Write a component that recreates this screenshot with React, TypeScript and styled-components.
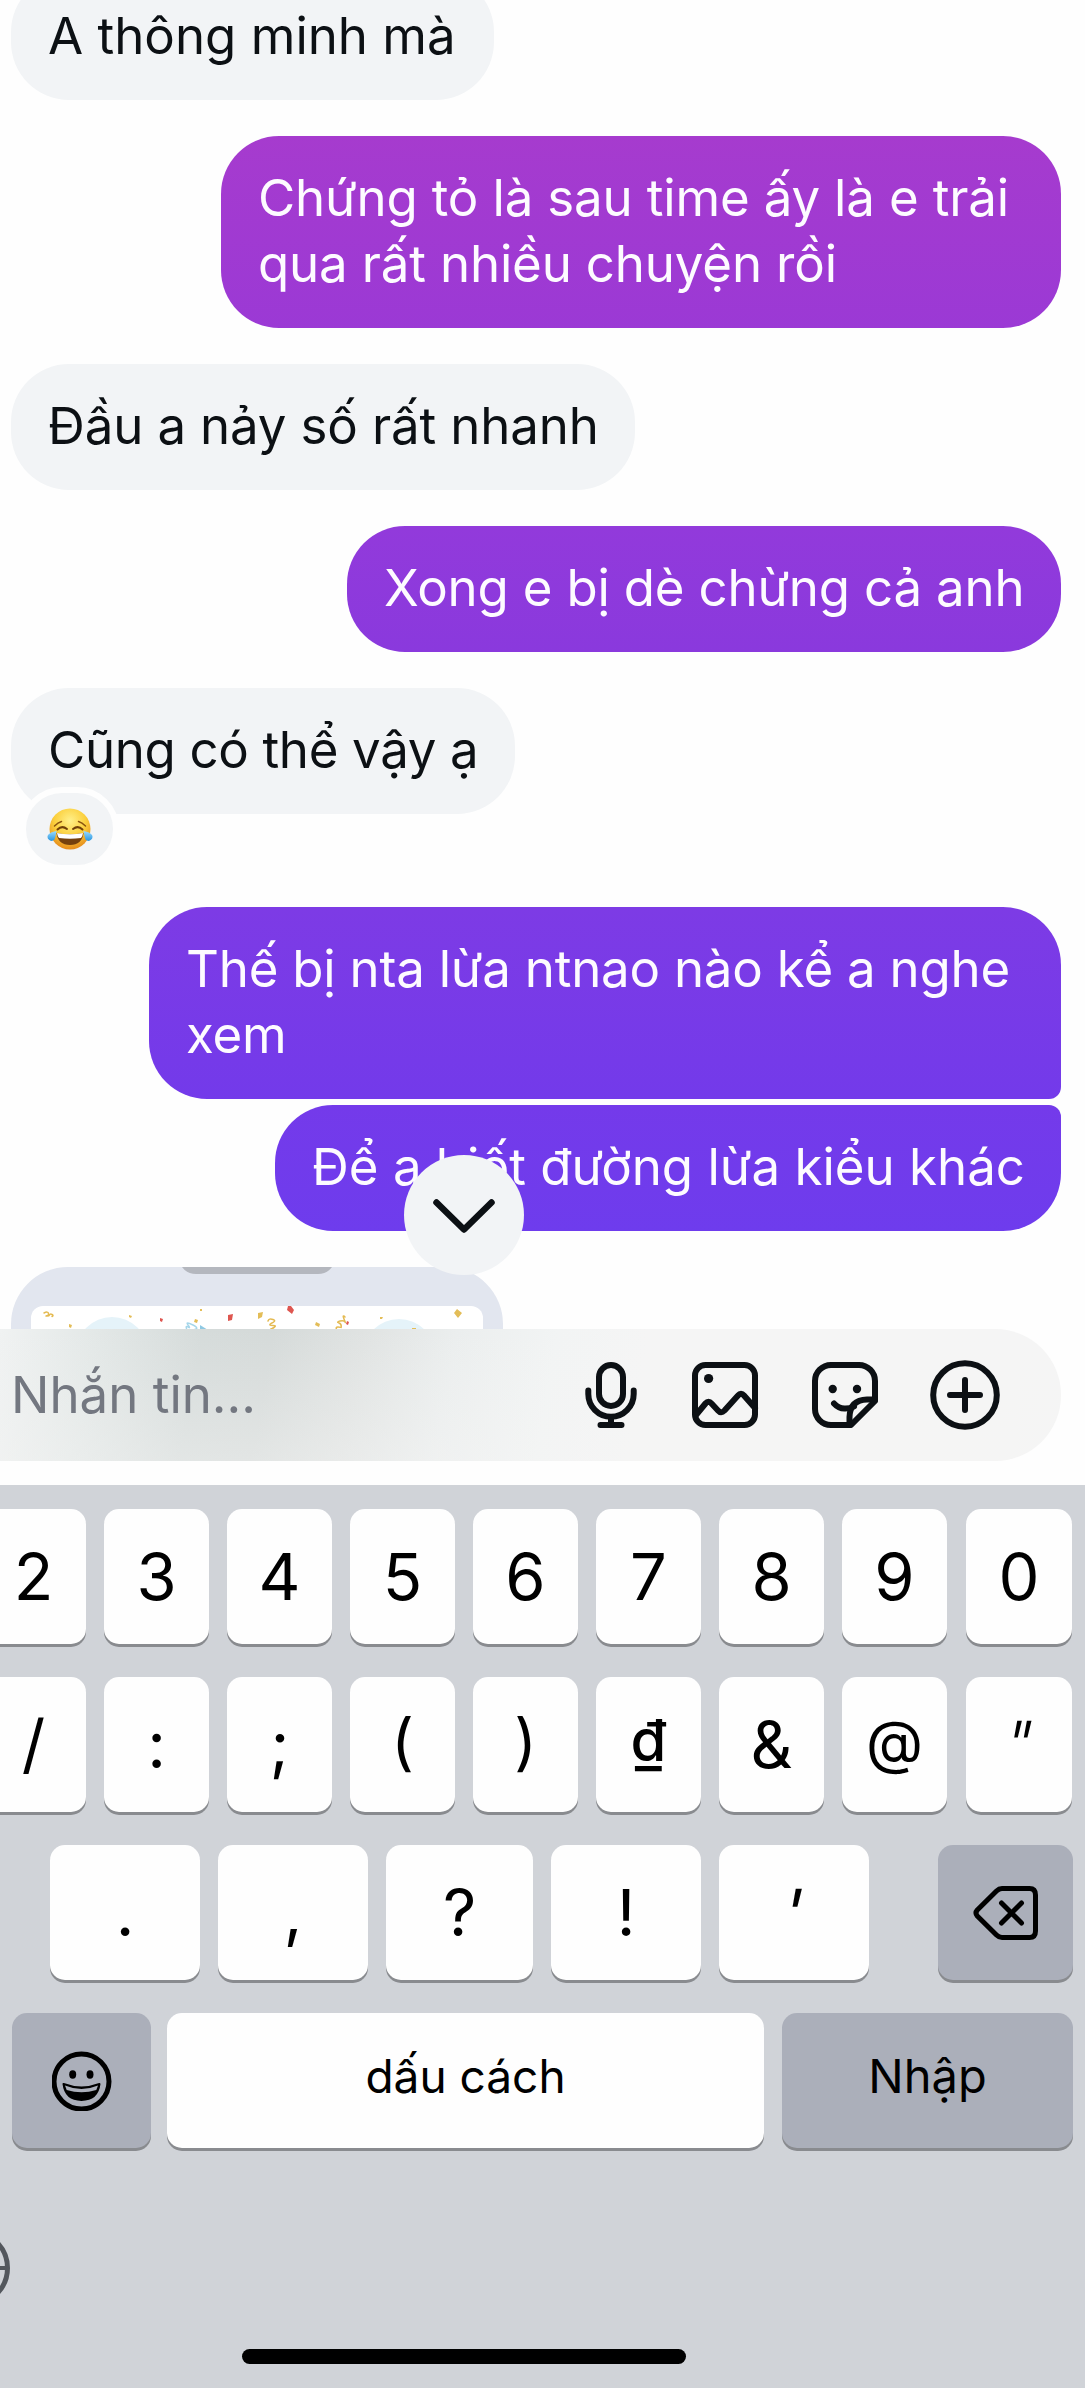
import React from "react";
import styled, { createGlobalStyle, css } from "styled-components";

const GlobalStyle = createGlobalStyle`
  *, *::before, *::after { box-sizing: border-box; }
  body { margin: 0; background: #fefefe; }
`;

const Screen = styled.main`
  display: flex;
  flex-direction: column;
  width: 1085px;
  height: 2388px;
  overflow: hidden;
  background: #fefefe;
  color: #0c1014;
  font-family: Inter, "Noto Sans", "Liberation Sans", sans-serif;
  font-size: 51px;
`;

/* ---------- conversation ---------- */

const Thread = styled.section`
  position: relative;
  display: flex;
  flex-direction: column;
  flex: none;
  height: 1329px;
  overflow: hidden;
`;

const Bubble = styled.div<{
  $mine?: boolean;
  $width: number;
  $gap: number;
  $tint?: [string, string];
  $join?: "above" | "below";
  $tracking?: number;
}>`
  position: relative;
  flex: none;
  align-self: ${(p) => (p.$mine ? "flex-end" : "flex-start")};
  width: ${(p) => p.$width}px;
  margin: ${(p) => p.$gap}px 24px 0 11px;
  padding: 29px 0 31px 37px;
  border-radius: 58px;
  line-height: 66px;
  white-space: pre;
  letter-spacing: ${(p) => p.$tracking ?? 0}px;
  background: #f2f4f6;
  ${(p) =>
    p.$tint &&
    css`
      color: #fdfbff;
      background: linear-gradient(${p.$tint[0]}, ${p.$tint[1]});
    `}
  ${(p) => p.$join === "below" && "border-bottom-right-radius: 12px;"}
  ${(p) => p.$join === "above" && "border-top-right-radius: 12px;"}
`;

const Reaction = styled.span`
  position: absolute;
  left: 9px;
  bottom: -57px;
  display: flex;
  align-items: center;
  justify-content: center;
  width: 99px;
  height: 84px;
  border: 6px solid #fefefe;
  border-radius: 42px;
  background: #f2f4f6;
`;

const Attachment = styled.div`
  flex: none;
  width: 492px;
  height: 120px;
  margin: 36px 0 0 11px;
  border-radius: 57px 57px 0 0;
  overflow: hidden;
  background: #e2e6ef;

  svg { display: block; }
`;

const ScrollDown = styled.button`
  position: absolute;
  left: 404px;
  top: 1155px;
  width: 120px;
  height: 120px;
  padding: 0;
  border: 0;
  border-radius: 50%;
  background: #f2f4f6;

  svg { display: block; }
`;

/* ---------- composer ---------- */

const Composer = styled.section`
  display: flex;
  flex: none;
  align-items: center;
  height: 132px;
  margin-right: 24px;
  padding: 0 56px 0 11px;
  border-radius: 0 66px 66px 0;
  background:
    linear-gradient(rgba(245, 245, 245, 0) 0%, rgba(245, 245, 244, 0.42) 100%),
    linear-gradient(100deg, #f0f2f2 0, #e3e8e7 95px, #d5dbda 200px, #d5dad9 270px, #e0e3e2 360px, #ebeeee 450px, #f2f4f4 550px, #f5f5f5 640px);
`;

const Placeholder = styled.span`
  flex: 1;
  padding-bottom: 2px;
  color: #737780;
`;

const Tools = styled.div`
  display: flex;
  gap: 40px;
  align-items: center;
`;

const Tool = styled.svg<{ $shift?: number }>`
  display: block;
  width: 80px;
  height: 80px;
  margin-left: ${(p) => p.$shift ?? 0}px;
  fill: none;
  stroke: #0c1014;
  stroke-width: 6;
  stroke-linecap: round;
  stroke-linejoin: round;

  .dot { fill: #0c1014; stroke: none; }
`;

/* ---------- keyboard ---------- */

const Keyboard = styled.section`
  display: flex;
  flex-direction: column;
  flex: 1;
  margin-top: 24px;
  padding-top: 24px;
  background: #d0d3d8;
`;

const KeyRow = styled.div<{ $pad?: string }>`
  display: flex;
  flex: none;
  justify-content: flex-end;
  gap: 18px;
  height: 135px;
  margin-bottom: 33px;
  padding: ${(p) => p.$pad ?? "0 13px 0 0"};
`;

const Key = styled.button<{
  $width?: number;
  $dark?: boolean;
  $before?: number;
  $lift?: number;
  $size?: number;
  $weight?: number;
}>`
  display: flex;
  flex: none;
  align-items: center;
  justify-content: center;
  width: ${(p) => p.$width ?? 105}px;
  height: 135px;
  margin-left: ${(p) => p.$before ?? 0}px;
  padding: 0 0 ${(p) => p.$lift ?? 0}px;
  border: 0;
  border-radius: 15px;
  background: ${(p) => (p.$dark ? "#abafba" : "#fefefe")};
  box-shadow: 0 3px 0 #898b8f;
  color: #000;
  font: inherit;
  font-size: ${(p) => p.$size ?? 65}px;
  font-weight: ${(p) => p.$weight ?? 400};
`;

const Slanted = styled.span`
  display: inline-block;
  transform: skewX(-12deg);
`;

const BottomBar = styled.div`
  display: flex;
  flex: 1;
  flex-direction: column;
  justify-content: space-between;
  padding: 51px 0 24px;
`;

const Globe = styled.svg`
  display: block;
  width: 12px;
  height: 78px;
`;

const HomeIndicator = styled.div`
  width: 444px;
  height: 15px;
  margin-left: 242px;
  border-radius: 8px;
  background: #000;
`;

const JoyFace = () => (
  <svg width="46" height="44" viewBox="0 0 46 44">
    <defs>
      <radialGradient id="skin" cx=".5" cy=".3" r=".7">
        <stop offset="0" stopColor="#fff08a" />
        <stop offset=".55" stopColor="#fbcf3c" />
        <stop offset="1" stopColor="#e58a1a" />
      </radialGradient>
      <linearGradient id="tear" x1="0" y1="0" x2="0" y2="1">
        <stop offset="0" stopColor="#9bdcff" />
        <stop offset="1" stopColor="#2c97e0" />
      </linearGradient>
    </defs>
    <circle cx="23" cy="22" r="20.5" fill="url(#skin)" />
    <path d="M9.5 26q13 2.500 27 0q-1.500 12-13.500 12T9.500 26Z" fill="#75400d" />
    <path d="M10 26q13 2.500 26 0q-.3 3.500-2 5q-11 1.500-22 0q-1.600-2-2-5Z" fill="#fff" />
    <path d="M7.500 19q3.500-3.500 7-4.500M38.500 19q-3.500-3.500-7-4.500" fill="none" stroke="#8a5310" strokeWidth="1.500" strokeLinecap="round" />
    <path d="M10.500 22.500q4.500-4.500 9.500-.5M26 22q5-4 9.500.5" fill="none" stroke="#714009" strokeWidth="2" strokeLinecap="round" />
    <path d="M9.500 24q-1 6-2 8.500a4 4 0 0 1-6.500-4.500q2-3 8.500-4ZM36.500 24q1 6 2 8.500a4 4 0 0 0 6.500-4.500q-2-3-8.500-4Z" fill="url(#tear)" />
  </svg>
);

const PartyScene = () => (
  <svg width="492" height="120" viewBox="0 0 492 120">
    <path d="M171 0H321Q316 7 307 7H185Q176 7 171 0Z" fill="#b4b7be" />
    <rect x="20" y="39" width="452" height="110" rx="12" fill="#fff" />
    <circle cx="101" cy="86" r="36" fill="#e5f3f9" />
    <circle cx="388" cy="88" r="36" fill="#e5f3f9" />
    <g fill="#e3bd58">
      <path d="M247 46l5-1-1 5-4 2ZM184 52l3 1-1 3-3-1ZM305 55l4 2-1 3-4-2ZM443 46l3-4 5 4-4 5Z" />
      <path d="M58 57l3 1-1 3-2-1ZM118 48l3 1-1 2-2-1ZM189 42h2v2h-2ZM369 50h3l-1 2h-2ZM401 61h4v2h-4Z" />
    </g>
    <g fill="#de5650">
      <path d="M217 48l5-1-1 6-4 1ZM277 39h3l3 4-2 4-5-4ZM149 51l3 1-1 3-2-1ZM336 54l2 1-1 3-2-1Z" />
    </g>
    <path d="M189 58l8 5h-8Z" fill="#8fc9e3" />
    <path d="M176 63q-2-5 1-3t0-2 5 0-1 5" fill="none" stroke="#a6d6ea" strokeWidth="1.500" />
    <g fill="none" stroke="#e4ba52" strokeWidth="1.500" strokeLinecap="round">
      <path d="M257 54q1-3 5-1.500t-2 4q-3 2 2 2t-1 3q-3 1 2 1" />
      <path d="M326 63q-2-3 1-3t3 1q1-4-2-5t1-2 5 1-1-3 1-2" />
      <path d="M33 46q4-2 4.500.5t-3 2.500q3.500.5 4-1t2.500-.5 0 2" />
    </g>
  </svg>
);

const messages = [
  { text: "A thông minh mà", width: 483, gap: -26, tracking: 0 },
  { text: "Chứng tỏ là sau time ấy là e trải\nqua rất nhiều chuyện rồi", width: 840, gap: 36, mine: true, tint: ["#a63bce", "#9b39d5"], tracking: -0.16 },
  { text: "Đầu a nảy số rất nhanh", width: 624, gap: 36, tracking: -0.14 },
  { text: "Xong e bị dè chừng cả anh", width: 714, gap: 36, mine: true, tint: ["#923adb", "#8a39dd"], tracking: -0.19 },
  { text: "Cũng có thể vậy ạ", width: 504, gap: 36, reaction: true, tracking: -0.34 },
  { text: "Thế bị nta lừa ntnao nào kể a nghe\nxem", width: 912, gap: 93, mine: true, tint: ["#7d3be5", "#733aea"], join: "below", tracking: -0.22 },
  { text: "Để a biết đường lừa kiểu khác", width: 786, gap: 6, mine: true, tint: ["#743aea", "#6e3ced"], join: "above", tracking: 0 },
] as {
  text: string;
  width: number;
  gap: number;
  tracking: number;
  mine?: boolean;
  tint?: [string, string];
  join?: "above" | "below";
  reaction?: boolean;
}[];

const numberKeys = ["2", "3", "4", "5", "6", "7", "8", "9"];

const symbolKeys: { label: string; lift?: number; size?: number; weight?: number }[] = [
  { label: "/", lift: 3 },
  { label: ":" },
  { label: ";" },
  { label: "(", lift: 6, size: 62 },
  { label: ")", lift: 6, size: 62 },
  { label: "₫", lift: 10, size: 58, weight: 500 },
  { label: "&" },
  { label: "@", lift: 7, size: 59 },
];

export default function App() {
  return (
    <>
      <GlobalStyle />
      <Screen>
        <Thread>
          {messages.map((m) => (
            <Bubble key={m.text} $mine={m.mine} $width={m.width} $gap={m.gap} $tint={m.tint} $join={m.join} $tracking={m.tracking}>
              {m.text}
              {m.reaction && (
                <Reaction>
                  <JoyFace />
                </Reaction>
              )}
            </Bubble>
          ))}
          <Attachment>
            <PartyScene />
          </Attachment>
          <ScrollDown aria-label="Scroll down">
            <svg width="120" height="120" fill="none" stroke="#0c1014" strokeWidth="6.500" strokeLinecap="round" strokeLinejoin="round">
              <path d="M32.500 47.500 60 74.500 87.500 47.500" />
            </svg>
          </ScrollDown>
        </Thread>

        <Composer>
          <Placeholder>Nhắn tin...</Placeholder>
          <Tools>
            <Tool viewBox="0 0 80 80">
              <rect x="28" y="10" width="24" height="41" rx="12" />
              <path d="M17.300 35.500V39a22.700 22.700 0 0 0 45.400 0v-3.500M40 62v7M29.500 70h21" />
            </Tool>
            <Tool viewBox="0 0 80 80" $shift={-6}>
              <rect x="10" y="10" width="60" height="60" rx="10.500" />
              <circle className="dot" cx="23.600" cy="23.500" r="4.600" />
              <path d="M11 60 20.500 48.500Q23.500 45 26.500 48.500L33 55.500Q36 59 39.500 55.500L53 40.500Q56 37 59 40.500L70 53" />
            </Tool>
            <Tool viewBox="0 0 80 80">
              <path d="M46 70H26A16 16 0 0 1 10 54V26A16 16 0 0 1 26 10H54A16 16 0 0 1 70 26V46Z" />
              <path d="M70 44.500H62Q45 45 44.500 62V70" />
              <path d="M29 48.500Q34 54 40.500 53.500Q45.500 53.500 49 51.500" />
              <circle className="dot" cx="27.700" cy="34" r="4.200" />
              <circle className="dot" cx="52" cy="34" r="4.200" />
            </Tool>
            <Tool viewBox="0 0 80 80">
              <circle cx="40" cy="40" r="31.800" />
              <path d="M25 40H55M40 25V55" />
            </Tool>
          </Tools>
        </Composer>

        <Keyboard>
          <KeyRow>
            {numberKeys.map((k) => (
              <Key key={k}>{k}</Key>
            ))}
            <Key $width={106} $before={1}>0</Key>
          </KeyRow>
          <KeyRow>
            {symbolKeys.map((k) => (
              <Key key={k.label} $lift={k.lift} $size={k.size} $weight={k.weight}>
                {k.label}
              </Key>
            ))}
            <Key $width={106} $before={1} $weight={300}>
              <Slanted>"</Slanted>
            </Key>
          </KeyRow>
          <KeyRow $pad="0 12px 0 0">
            <Key $width={150}>.</Key>
            <Key $width={150}>,</Key>
            <Key $width={147}>?</Key>
            <Key $width={150}>!</Key>
            <Key $width={150}>
              <Slanted>'</Slanted>
            </Key>
            <Key $width={135} $dark $before={51} aria-label="Delete">
              <svg width="65" height="54" fill="none" stroke="#000" strokeWidth="5" strokeLinecap="round" strokeLinejoin="round">
                <path d="M29 2.500H56.500Q62.500 2.500 62.500 9V45Q62.500 51.500 56.500 51.500H29Q26 51.500 23.500 49L4.300 30Q1.700 27 4.300 24L23.500 5Q26 2.500 29 2.500Z" />
                <path d="M28.500 17 48.500 37M48.500 17 28.500 37" />
              </svg>
            </Key>
          </KeyRow>
          <KeyRow $pad="0 12px 0 0">
            <Key $width={139} $dark aria-label="Emoji">
              <svg width="60" height="60">
                <circle cx="29.500" cy="30.500" r="27.500" fill="none" stroke="#000" strokeWidth="5" />
                <ellipse cx="20.700" cy="23.500" rx="3.500" ry="4.200" />
                <ellipse cx="38" cy="23.500" rx="3.500" ry="4.200" />
                <path d="M11.500 33Q29.500 40 47.500 33Q45.500 49 29.500 49T11.500 33Z" stroke="#000" strokeWidth="2" strokeLinejoin="round" />
                <path d="M13 34.500Q29.500 41.500 46 34.500L44.300 39Q29.500 43.500 14.700 39Z" fill="#abafba" />
              </svg>
            </Key>
            <Key $width={597} $size={46} $lift={10} $before={-2}>dấu cách</Key>
            <Key $width={291} $size={47} $lift={10} $dark>Nhập</Key>
          </KeyRow>
          <BottomBar>
            <Globe viewBox="0 0 12 78" fill="none" stroke="#53575d" strokeWidth="5">
              <circle cx="-29" cy="36" r="36.500" />
              <path d="M-20 36H8" strokeWidth="4" />
            </Globe>
            <HomeIndicator />
          </BottomBar>
        </Keyboard>
      </Screen>
    </>
  );
}
